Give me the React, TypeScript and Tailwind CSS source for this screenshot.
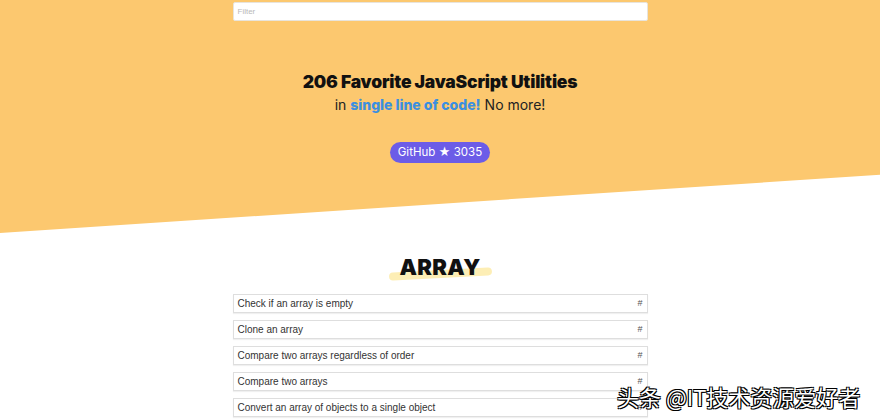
import React from 'react';

const utilities = [
  'Check if an array is empty',
  'Clone an array',
  'Compare two arrays regardless of order',
  'Compare two arrays',
  'Convert an array of objects to a single object',
];

const App: React.FC = () => {
  return (
    <div className="relative w-[880px] h-[420px] overflow-hidden bg-white font-['Inter',sans-serif]">
      {/* Hero */}
      <header className="h-[233px] bg-[#fcc86f] [clip-path:polygon(0_0,100%_0,100%_75%,0_100%)] pt-[2px]">
        <div className="mx-auto w-[415px] h-[19px] bg-white border border-[#e8e4dc] rounded-[2px] flex items-center px-[4px]">
          <span className="text-[8px] text-[#b9b9b9] font-['Liberation_Sans',sans-serif]">Filter</span>
        </div>
        <h1 className="mt-[50px] text-center text-[17.5px] leading-[22px] font-black text-[#111] tracking-[-0.2px]">
          206 Favorite JavaScript Utilities
        </h1>
        <p className="mt-[2px] text-center text-[14px] leading-[20px] text-[#222]">
          in <span className="font-extrabold text-[#3b8fe0]">single line of code!</span> No more!
        </p>
        <div className="mt-[27px] flex justify-center">
          <button className="h-[21px] px-[8px] rounded-full bg-[#6c5ce7] text-white text-[11.5px] leading-[21px]">
            GitHub ★ 3035
          </button>
        </div>
      </header>

      {/* Array section */}
      <section className="pt-[22px]">
        <div className="flex justify-center">
          <div className="relative px-[8px]">
            <div className="absolute left-[-2px] right-[-4px] top-[15px] h-[8px] bg-[#fdeeb5] -rotate-[3deg] rounded-[4px]" />
            <h2 className="relative text-[22px] leading-[24px] font-black text-[#111] tracking-[0.3px]">ARRAY</h2>
          </div>
        </div>
        <ul className="mt-[15px] mx-auto w-[415px] flex flex-col gap-[7px] font-['Liberation_Sans',sans-serif]">
          {utilities.map((u) => (
            <li
              key={u}
              className="h-[19px] flex items-center justify-between px-[4px] border border-[#dedede] bg-white shadow-[0_1px_1px_rgba(0,0,0,0.06)]"
            >
              <span className="text-[10px] text-[#333]">{u}</span>
              <span className="text-[9px] text-[#555]">#</span>
            </li>
          ))}
        </ul>
      </section>

      {/* Watermark */}
      <div className="absolute left-[617px] top-[382px] text-[22px] leading-[28px] text-white font-['Noto_Sans_CJK_SC',sans-serif] [text-shadow:0_0_1px_#000,1px_1px_0_#000,-1px_-1px_0_#000,1px_-1px_0_#000,-1px_1px_0_#000]">
        头条 @IT技术资源爱好者
      </div>
    </div>
  );
};

export default App;
